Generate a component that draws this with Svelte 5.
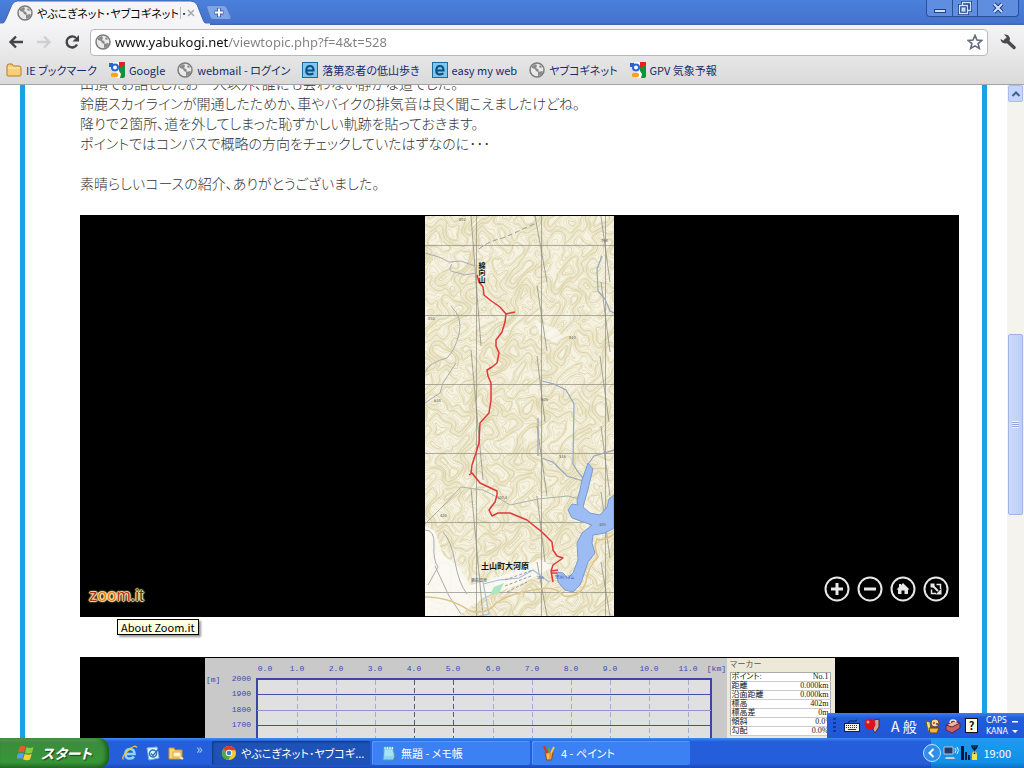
<script>
  const bookmarks = [
    { icon: 'folder', label: 'IE ブックマーク' },
    { icon: 'google', label: 'Google' },
    { icon: 'globe', label: 'webmail - ログイン' },
    { icon: 'e', label: '落第忍者の低山歩き' },
    { icon: 'e', label: 'easy my web' },
    { icon: 'globe', label: 'ヤブコギネット' },
    { icon: 'google', label: 'GPV 気象予報' }
  ];

  const post = [
    '山頂でお話ししたお一人以外、誰にも会わない静かな道でした。',
    '鈴鹿スカイラインが開通したためか、車やバイクの排気音は良く聞こえましたけどね。',
    '降りで２箇所、道を外してしまった恥ずかしい軌跡を貼っておきます。',
    'ポイントではコンパスで概略の方向をチェックしていたはずなのに･･･',
    '',
    '素晴らしいコースの紹介、ありがとうございました。'
  ];

  const marker = [
    ['ポイント:', 'No.1'],
    ['距離', '0.000km'],
    ['沿面距離', '0.000km'],
    ['標高', '402m'],
    ['標高差', '0m'],
    ['傾斜', '0.0°'],
    ['勾配', '0.0%']
  ];

  const tasks = [
    { icon: 'chrome', label: 'やぶこぎネット･ヤブコギ...', active: true },
    { icon: 'note', label: '無題 - メモ帳', active: false },
    { icon: 'paint', label: '4 - ペイント', active: false }
  ];

  const km = [
    [60, '0.0'], [92, '1.0'], [131, '2.0'], [170, '3.0'], [209, '4.0'], [248, '5.0'],
    [288, '6.0'], [327, '7.0'], [366, '8.0'], [405, '9.0'], [444, '10.0'], [483, '11.0']
  ];
  const heights = [[21, '2000'], [36, '1900'], [52, '1800'], [67, '1700'], [83, '1600']];

  // Terrain height at a point of the map sheet
  function terrain(px, py) {
    const x = px * 1.5;
    const y = py * 1.5;
    const u = x + 7 * Math.sin(y / 13) + 4 * Math.sin(y / 5.3 + x / 17);
    const v = y + 7 * Math.sin(x / 11) + 4 * Math.cos(x / 4.7 + y / 19);
    return (
      3 * Math.sin(u / 19) * Math.cos(v / 23) +
      1.6 * Math.sin(u / 8 + v / 15) +
      1.4 * Math.cos(v / 9 - u / 21) +
      0.5 * Math.sin(u / 3.6) * Math.sin(v / 4)
    );
  }

  // Marching squares over the terrain, one path for all levels
  function contours(step, levels) {
    let d = '';
    for (let y = 0; y < 400; y += step) {
      for (let x = 0; x < 189; x += step) {
        const c = [
          [x, y, terrain(x, y)],
          [x + step, y, terrain(x + step, y)],
          [x + step, y + step, terrain(x + step, y + step)],
          [x, y + step, terrain(x, y + step)]
        ];
        for (const l of levels) {
          const p = [];
          for (let i = 0; i < 4; i++) {
            const a = c[i];
            const b = c[(i + 1) % 4];
            if (a[2] < l !== b[2] < l) {
              const t = (l - a[2]) / (b[2] - a[2]);
              p.push((a[0] + t * (b[0] - a[0])).toFixed(1) + ' ' + (a[1] + t * (b[1] - a[1])).toFixed(1));
            }
          }
          for (let i = 0; i + 1 < p.length; i += 2) d += 'M' + p[i] + 'L' + p[i + 1];
        }
      }
    }
    return d;
  }
  const fine = contours(2, [-5, -4.3, -3.6, -2.9, -2.2, -1.5, -0.8, -0.1, 0.6, 1.3, 2, 2.7, 3.4, 4.1, 4.8]);
  const bold = contours(2, [-4, -1.9, 0.2, 2.3, 4.4]);
</script>

{#snippet icon(name)}
  <svg class="ico" viewBox="0 0 16 16" aria-hidden="true">
    {#if name === 'folder'}
      <path d="M1 4q0-2 2-2h3l1.500 2H13q2 0 2 2v7q0 1-1 1H2q-1 0-1-1z" fill="#f7cf7b" stroke="#b57c22" />
      <path d="M2 6h12" stroke="#fff0c0" />
    {:else if name === 'google'}
      <path d="M8 0h8v9H8z" fill="#e0231c" />
      <path d="M10 6l6-3v11q0 2-2 2h-4z" fill="#12913b" />
      <path d="M0 1h4v4H0z" fill="#2a62d8" />
      <path d="M4 0h6v9l2 3-1 4H4z" fill="#fff" />
      <circle cx="6" cy="5.500" r="3" fill="#fff" stroke="#2a62d8" stroke-width="2" />
      <ellipse cx="5.500" cy="13" rx="3.700" ry="2.500" fill="#f6a41a" />
    {:else if name === 'globe'}
      <circle cx="8" cy="8" r="7" fill="#e9e9e9" stroke="#7c7c7c" stroke-width="1.500" />
      <path d="M3 4l4-2 1 2-1 2 2 1 1 2-1 1-2-1-1-2-3-1zM9 10l4-1 1 1-2 3-3 1zM11 3l2 2-1 1-2-1z" fill="#8b8b8b" />
    {:else if name === 'e'}
      <rect x="0.500" y="0.500" width="15" height="15" fill="#7cc8ee" stroke="#1c6b9f" />
      <path d="M4.500 8.500h7q0-4.500-3.500-4.500T4.300 8.300 8.300 12.300q2 0 3-1" fill="none" stroke="#0f4f86" stroke-width="2.200" />
    {:else if name === 'chrome'}
      <circle cx="8" cy="8" r="7" fill="#f7ca2b" />
      <path d="M8 8L1.900 4.500A7 7 0 0 1 14.500 5.300H8z" fill="#de3b2f" />
      <path d="M8 8L1.900 4.500A7 7 0 0 0 7.500 15l3-5.500z" fill="#4fa94a" />
      <circle cx="8" cy="8" r="3.200" fill="#fff" />
      <circle cx="8" cy="8" r="2.300" fill="#3d7fd6" />
    {:else if name === 'note'}
      <path d="M3 2h9l2 11-2 2H2z" fill="#8ad4f4" stroke="#4c9cc4" />
      <path d="M4 2v2M6.500 2v2M9 2v2M11.500 2v2" stroke="#e9fbff" />
      <path d="M4 6h7M4 8h8M4 10h8" stroke="#cdf0fc" />
      <path d="M12 14l3-3v3z" fill="#5b8b3a" />
    {:else if name === 'paint'}
      <path d="M4 7h8l-1.500 8h-5z" fill="#e99b3b" stroke="#94501a" />
      <path d="M6 8L3 1" stroke="#d13b21" stroke-width="2" />
      <path d="M8 8V3" stroke="#59a53a" stroke-width="2" />
      <path d="M10 8l3-6" stroke="#f2c84c" stroke-width="2" />
      <path d="M7 9v5" stroke="#fbe08a" />
    {:else if name === 'ie'}
      <path d="M4 9h8.500q0-5-4.500-5T3.500 9 8 13.500q2.800 0 4-2" fill="none" stroke="#8fd4ff" stroke-width="2.600" />
      <path d="M1.500 14.500Q-1 12 6 5.500T15 2.500" fill="none" stroke="#f4c437" stroke-width="1.300" />
    {:else if name === 'outlook'}
      <path d="M2 3l10-1 2 11-10 2z" fill="#e4f2fc" stroke="#7fb4e0" />
      <circle cx="8" cy="8.500" r="3.500" fill="none" stroke="#2b78c8" stroke-width="1.500" />
      <path d="M6 8.500l2 2 5-6" fill="none" stroke="#2f6fb4" stroke-width="1.300" />
    {:else if name === 'explorer'}
      <path d="M1 3h5l1 2h7v9H1z" fill="#f8d777" stroke="#c9922c" />
      <rect x="5" y="7" width="8" height="5" fill="#fff6d0" stroke="#d9a63e" />
      <path d="M12 12l3 2" stroke="#f3efe0" stroke-width="2" />
    {:else if name === 'keyboard'}
      <path d="M4 5q1-3 4-2t5-1" fill="none" stroke="#101c50" />
      <rect x="0.500" y="5.500" width="15" height="8" fill="#f4f0e0" stroke="#101c50" />
      <path d="M2 7.500h12M2 9.500h12" stroke="#333" stroke-dasharray="1 1" />
      <path d="M4 11.500h8" stroke="#333" />
    {:else if name === 'ime'}
      <path d="M10 2l5-1v8l-4 6-2-3z" fill="#c9a9a4" stroke="#5a2323" />
      <circle cx="6" cy="6" r="5.500" fill="#d8141c" />
      <circle cx="4" cy="4" r="1.500" fill="#ff9c9c" />
    {:else if name === 'palette'}
      <path d="M1 3l4 1 1 9H3z" fill="#ece08c" stroke="#6b5b20" />
      <circle cx="10" cy="5" r="4" fill="#f2d9a2" stroke="#6b4422" />
      <path d="M4 10h10l-2 5H5z" fill="#f4b532" stroke="#6b4422" />
      <circle cx="9" cy="5" r="1" fill="#c9302a" /><circle cx="12" cy="6" r="1" fill="#28408e" />
    {:else if name === 'toolbox'}
      <path d="M1 7l8-4 6 2v5l-8 5-6-3z" fill="#c9606a" stroke="#5f2634" />
      <path d="M1 7l6 2 8-4-6-2z" fill="#f2b3ad" stroke="#5f2634" />
      <path d="M5 5q0-3 3-3t3 2" fill="none" stroke="#f7e9cd" stroke-width="1.500" />
    {/if}
  </svg>
{/snippet}

<div class="desktop">
  <header class="chrome">
    <div class="tabs">
      <div class="tab">
        <svg class="tabshape" viewBox="0 0 214 25" preserveAspectRatio="none" aria-hidden="true">
          <path d="M0 25Q4 24 6 19L12 5Q14 1 18 1H194Q199 1 201 5L207 20Q209 25 214 25Z" fill="#f5f5f7" stroke="#3e64aa" />
          <path d="M0 24.500H214" stroke="#f5f5f7" stroke-width="2" />
        </svg>
        {@render icon('globe')}
        <span class="title">やぶこぎネット･ヤブコギネット ･</span>
        <span class="cut"></span>
        <button class="x" aria-label="タブを閉じる">
          <svg viewBox="0 0 8 8"><path d="M1 1l6 6M7 1L1 7" stroke="#a7a7a7" stroke-width="1.500" /></svg>
        </button>
      </div>
      <button class="newtab" aria-label="新しいタブ">
        <svg viewBox="0 0 26 15">
          <path d="M2 0.500H18Q20 0.500 21 3L25 12Q25.500 14.500 23 14.500H7Q5 14.500 4 12L0.700 3Q0 0.500 2 0.500Z" fill="#7ea4e8" stroke="#5077bd" />
          <path d="M8.500 7.500h9M13 3v9" stroke="#3f66ad" stroke-width="4" />
          <path d="M9 7.500h8M13 3.500v8" stroke="#fff" stroke-width="2" />
        </svg>
      </button>
      <div class="win">
        <button aria-label="最小化"><svg viewBox="0 0 14 14"><rect x="1.500" y="8.500" width="11" height="3" fill="#d4e1fa" stroke="#1f3f86" /></svg></button>
        <button aria-label="元に戻す"><svg viewBox="0 0 14 14"><path d="M4.500 4V1.500h8v8H10M1.500 4.500h8v8h-8z" fill="none" stroke="#1f3f86" stroke-width="3" /><path d="M4.500 4V1.500h8v8H10M1.500 4.500h8v8h-8zM4.500 7.500h2v2h-2z" fill="none" stroke="#d4e1fa" stroke-width="1.300" /></svg></button>
        <button class="wide" aria-label="閉じる"><svg viewBox="0 0 14 14"><path d="M3 3l8 8M11 3l-8 8" stroke="#1f3f86" stroke-width="4" /><path d="M3 3l8 8M11 3l-8 8" stroke="#d4e1fa" stroke-width="2" /></svg></button>
      </div>
    </div>

    <div class="toolbar">
      <button aria-label="戻る"><svg viewBox="0 0 16 16"><path d="M15 8H3M8 2.500L2.500 8 8 13.500" fill="none" stroke="#444" stroke-width="2.400" /></svg></button>
      <button aria-label="進む"><svg viewBox="0 0 16 16"><path d="M1 8h12M8 2.500L13.500 8 8 13.500" fill="none" stroke="#cfcfcf" stroke-width="2.400" /></svg></button>
      <button aria-label="再読み込み"><svg viewBox="0 0 16 16"><path d="M13 10.500A5.500 5.500 0 1 1 12 4" fill="none" stroke="#444" stroke-width="2.400" /><path d="M15 1v6.500H8.500z" fill="#444" /></svg></button>
      <div class="omni">
        {@render icon('globe')}
        <input aria-label="アドレス" value="www.yabukogi.net/viewtopic.php?f=4&t=528" />
        <button aria-label="ブックマークに追加"><svg viewBox="0 0 18 18"><path d="M9 1.500l2.200 5.300 5.600.400-4.300 3.600 1.400 5.500L9 13.300l-4.900 3 1.400-5.500L1.200 7.200l5.600-.400z" fill="#fff" stroke="#666b7c" stroke-width="1.800" /></svg></button>
      </div>
      <button aria-label="設定"><svg viewBox="0 0 16 16"><path d="M6 6l8 7.500" stroke="#4a4a4a" stroke-width="3.400" stroke-linecap="round" /><path d="M4 0.500q5-.500 6 4-.500 5-5 5-4-.500-4.500-4.500l3 1.500 2.500-1L6.500 3z" fill="#4a4a4a" /></svg></button>
    </div>

    <nav class="marks">
      {#each bookmarks as b}
        <a href="#top">{@render icon(b.icon)}<span>{b.label}</span></a>
      {/each}
    </nav>
  </header>

  <div class="view">
    <main>
      <article>
        {#each post as line}<p>{line}</p>{/each}
      </article>

      <section class="zoomit">
        <svg class="map" viewBox="0 0 189 400" aria-label="登山ルート地図">
          <rect width="189" height="400" fill="#f5f2e2" />
          <path d={fine} stroke="#e2dab4" stroke-width="0.700" fill="none" />
          <path d={bold} stroke="#d6ca98" stroke-width="0.700" fill="none" />
          <path d="M0 310l10 5 8 24 14 10 14 20 40-12 28-14 14 8-30 16-40 14-26 20H0z" fill="#fbfaf4" opacity="0.850" />
          <path d="M110 105l22 8 6 8-10 5-14-8z" fill="#fbfaf2" opacity="0.700" />
          <g stroke="#8c8c80" fill="none" stroke-width="0.700">
            <path d="M51.500 0V400M116.500 0V400M180.500 0V400M0 29.500H189M0 99.500H189M0 168.500H189M0 237.500H189M0 306.500H189M0 376.500H189" />
            <path d="M46 0l10 130M46 134l12 130M46 272l12 128M110 0l12 66M112 70l10 65M112 140l8 66M112 210l10 70M112 280l8 66M112 346l10 54M176 0l9 66M176 66l9 70M175 140l9 66M176 210l9 70M176 276l9 66M176 346l9 54" stroke="#86867a" />
          </g>
          <g fill="none" stroke="#a9abb0">
            <path d="M0 37l14 4 10 5 12-1 14 5M27 48q-5 7 2 8t10 3l12-2" />
            <path d="M54 33q10-8 24-11 16-7 33-15" stroke="#8f9ba8" stroke-dasharray="5 3" />
            <path d="M26 90q12 12 8 28t-12 24q-17 4-22 14M31 147l-13 20-3 10-15 10" />
            <path d="M0 308l20-20 16-17 22 3 14 7 13 8 28-6 30-3 11 3" stroke="#a9b4a6" />
            <path d="M0 314q10 0 9 15t4 22l-10 18M18 316q8 8 12 30t12 32M10 350l14 30 12 18" />
          </g>
          <g fill="none" stroke="#98a6bf" stroke-width="1.200">
            <path d="M177 40l-5 13 1 22 7 8 5 12 4 2" />
            <path d="M117 165l12 3 12 6 8 14-1 60 5 8 6 7M113 202v38M116 242l12 4 14 14 16 5M189 234l-20 6-5 7" />
            <path d="M58 368l16-4 20-2 14-8 16 12M58 366l6 32-10 2" stroke="#a3bfe0" />
          </g>
          <path d="M163 247L168 253 162 277 158 291 165 297 175 299 182 291 184 283 189 279V312L180 317 168 319 167 327 170 337 163 346 158 361 155 369 148 376 140 374 133 366 132 356 138 357 143 362 148 357 153 344 152 327 157 317 167 309 158 306 147 302 143 294 147 288 153 289 152 284 155 274 157 264Z" fill="#9dbcf3" stroke="#7b9ad0" stroke-linejoin="round" />
          <path d="M189 318q-10 8-17 5-4 8 1 18-10 10-12 25-6 16-22 14-8-10-24-7-30 4-44 14-8 12-26 8-20-14-45-14" fill="none" stroke="#ddc48d" stroke-width="1.500" />
          <path d="M69 371l10-4-5 10-9 2z" fill="#a9e8c3" />
          <path d="M80 364l28-10M80 370l26-10M82 376l20-10" stroke="#999" stroke-dasharray="3 2" />
          <path d="M52 59L54 66 58 71 59 79 65 84 75 91 81 98 90 96M81 98L80 106 77 116 71 124 71 130 74 137 72 147 67 151 62 154 63 160 66 167 66 184 64 197 55 207 54 227 51 237 47 249 46 257M44 259L47 257 55 267 72 275 72 279 70 286 64 294 67 300 73 297 85 297 102 304 117 316 127 326 128 334 132 340 138 342 128 349 126 355 133 354M126 357H132M126 355L128 366" fill="none" stroke="#e0383a" stroke-width="1.500" stroke-linejoin="round" />
          <text x="57" y="46" class="place" fill="#111">綿向山</text>
          <text x="56" y="353" class="town" fill="#111">土山町大河原</text>
          <g class="tiny" fill="#555">
            <text x="34" y="5">801</text><text x="3" y="104">852</text><text x="144" y="123">810</text><text x="116" y="185">605</text><text x="9" y="186">634</text><text x="176" y="26">764</text><text x="134" y="242">516</text><text x="72" y="283">500.4</text><text x="15" y="301">426</text><text x="174" y="310">305</text>
            <text x="46" y="366">鹿苑温泉</text><text x="112" y="363" fill="#3f62b8">296</text><text x="130" y="363" fill="#3f62b8">野洲川ダム</text>
          </g>
        </svg>

        <a class="brand" href="#zoom"><b>z</b><i>oo</i><b>m</b><em>.it</em></a>
        <div class="controls">
          <button aria-label="拡大"><svg viewBox="0 0 26 26"><circle cx="13" cy="13" r="11.500" /><path d="M7 13h12M13 7v12" class="thick" /></svg></button>
          <button aria-label="縮小"><svg viewBox="0 0 26 26"><circle cx="13" cy="13" r="11.500" /><path d="M7 13h12" class="thick" /></svg></button>
          <button aria-label="ホーム"><svg viewBox="0 0 26 26"><circle cx="13" cy="13" r="11.500" /><path d="M6.500 13.500L9 11V8h2v1.200L13 7l6.500 6.500H18V18h-3.500v-3.500h-3V18H8v-4.500z" class="fill" /></svg></button>
          <button aria-label="全画面"><svg viewBox="0 0 26 26"><circle cx="13" cy="13" r="11.500" /><path d="M13.500 8.500h4V13M8.500 13.500v4h4.500" class="mid" /><path d="M10 10l5 5" /><path d="M7.500 7.500h4v4h-4zM18.500 18.500v-6l-6 6z" class="fill" /></svg></button>
        </div>
        <div class="tip" role="tooltip">About Zoom.it</div>
      </section>

      <section class="profile">
        <div class="sheet">
          <svg class="graph" viewBox="0 0 522 110" aria-label="標高グラフ">
            <rect width="522" height="110" fill="#c9c9c9" />
            <rect x="52" y="21" width="454" height="100" fill="#e0e0e1" stroke="#3c46a0" stroke-width="2" />
            {#each heights as [y, t], i}
              {#if i > 0}<path d="M52 {y + 0.5}H506" stroke={i % 2 ? '#414fa6' : '#8d96cf'} />{/if}
              <text x="46" y={y + 2} text-anchor="end">{t}</text>
            {/each}
            {#each km as [x, t], i}
              {#if i > 0}<path d="M{x + 0.5} 22V110" stroke={i > 3 && i < 6 ? '#555a80' : '#a5abd4'} stroke-dasharray="5 3" />{/if}
              <text {x} y="13" text-anchor="middle">{t}</text>
            {/each}
            <text x="1" y="24">[m]</text>
            <text x="521" y="13" text-anchor="end">[km]</text>
          </svg>
          <div class="marker">
            <h2>マーカー</h2>
            <table>
              <tbody>
                {#each marker as [k, v]}<tr><th scope="row">{k}</th><td>{v}</td></tr>{/each}
              </tbody>
            </table>
          </div>
        </div>
      </section>
    </main>

    <div class="scroll">
      <button aria-label="上へ"><svg viewBox="0 0 10 10"><path d="M1.500 7L5 3.500 8.500 7" fill="none" stroke="#3f5d94" stroke-width="2" /></svg></button>
      <div class="track">
        <div class="thumb" style="top: 37.5%; height: 29.2%"><span></span></div>
      </div>
      <button aria-label="下へ"><svg viewBox="0 0 10 10"><path d="M1.500 3L5 6.500 8.500 3" fill="none" stroke="#3f5d94" stroke-width="2" /></svg></button>
    </div>

    <div class="langbar">
      <span class="grip"></span>
      {@render icon('keyboard')}
      {@render icon('ime')}
      <span class="mode">A 般</span>
      {@render icon('palette')}
      {@render icon('toolbox')}
      <span class="help">?</span>
      <span class="keys"><span>CAPS</span><span>KANA</span></span>
      <svg class="opts" viewBox="0 0 6 18"><path d="M0 4h6v1.500H0zM0 13h6l-3 3z" fill="#fff" /></svg>
    </div>
  </div>

  <footer class="taskbar">
    <button class="start">
      <svg viewBox="0 0 18 18" aria-hidden="true">
        <path d="M2.500 3q3-2 6-.200L7 8.300Q4 7 1 8.500z" fill="#f0582c" />
        <path d="M9.500 3.200q3 1.500 7-.200L15 8.700q-3.500 1.500-7 .200z" fill="#8bcb3d" />
        <path d="M.800 9.700q3-1.500 6-.200L5.300 15Q2.500 13.500-.700 15z" fill="#5a9df2" />
        <path d="M7.700 10q3.500 1.300 7 0L13 15.500q-3.500 1.500-7-.300z" fill="#fbd038" />
      </svg>
      <span>スタート</span>
    </button>
    <div class="quick">
      {@render icon('ie')}
      {@render icon('outlook')}
      {@render icon('explorer')}
      <span class="more">»</span>
    </div>
    <div class="tasks">
      {#each tasks as t}
        <button class:active={t.active}>{@render icon(t.icon)}<span>{t.label}</span></button>
      {/each}
    </div>
    <div class="tray">
      <svg class="hide" viewBox="0 0 18 18"><circle cx="9" cy="9" r="8.500" fill="#2f8eea" stroke="#bfe2ff" /><path d="M10.500 5l-4 4 4 4" fill="none" stroke="#fff" stroke-width="2" /></svg>
      <svg class="net" viewBox="0 0 36 18">
        <path d="M1 3h9v7H1z" fill="#233a6b" stroke="#b9c6d6" /><path d="M3 13h8l1 2H2z" fill="#c6ced8" />
        <path d="M12 4q2 2 0 5M14 3q3 3 0 7" fill="none" stroke="#d9efff" />
        <path d="M18 2h3v14h-3zM22 8h2v8h-2zM25 11h2v5h-2z" fill="#091a3d" />
        <path d="M28 2h7M29 3l2.500 3L34 3M31.500 3v7" stroke="#091a3d" stroke-width="1.500" fill="none" />
        <rect x="29" y="10" width="5" height="6" fill="#f2e34b" /><path d="M30 10V8h3v2" fill="none" stroke="#f2e34b" />
      </svg>
      <time>19:00</time>
    </div>
  </footer>
</div>

<style>
  :global(body) {
    margin: 0;
  }
  .desktop {
    display: flex;
    flex-direction: column;
    height: 100vh;
    overflow: hidden;
    background: #fff;
    color: #333;
    font: 11px/16px 'Noto Sans CJK JP', sans-serif;
    font-feature-settings: 'palt';
  }
  button {
    font: inherit;
    font-feature-settings: inherit;
    color: inherit;
    border: 0;
    padding: 0;
    background: none;
    display: flex;
    align-items: center;
    justify-content: center;
  }
  .ico {
    width: 16px;
    height: 16px;
    flex: none;
  }
  .chrome {
    flex: none;
    background: linear-gradient(#f5f5f7 25px, #dadada);
    border-bottom: 1px solid #a3a3a3;
  }

  .tabs {
    display: flex;
    height: 25px;
    background: linear-gradient(#4a80dc, #4673cd 90%, #3d63ae);
  }
  .tab {
    position: relative;
    display: flex;
    align-items: center;
    box-sizing: border-box;
    width: 210px;
    padding: 0 0 0 17px;
    color: #000;
  }
  .tab > .ico,
  .tab > span,
  .tab > button {
    position: relative;
  }
  .tabshape {
    position: absolute;
    inset: 0;
    width: 100%;
    height: 100%;
  }
  .title {
    width: 140px;
    margin-left: 4px;
    white-space: nowrap;
  }
  .cut {
    width: 1px;
    height: 12px;
    margin: 0 6px 0 3px;
    background: #bbb;
  }
  .x svg {
    width: 8px;
    height: 8px;
  }
  .newtab {
    align-self: center;
    margin-left: -4px;
  }
  .newtab svg {
    width: 26px;
    height: 15px;
  }
  .win {
    display: flex;
    height: 16px;
    margin: 0 5px 0 auto;
    border: 1px solid #2b4f97;
    border-top: 0;
    border-radius: 0 0 4px 4px;
    background: #5f8ddf;
  }
  .win button {
    width: 25px;
  }
  .win button + button {
    border-left: 1px solid #2b4f97;
  }
  .win .wide {
    width: 41px;
  }
  .win svg {
    width: 14px;
    height: 14px;
  }

  .toolbar {
    display: flex;
    align-items: center;
    gap: 12px;
    height: 34px;
    padding: 0 8px;
  }
  .toolbar svg {
    width: 16px;
    height: 16px;
  }
  .omni {
    flex: 1;
    display: flex;
    align-items: center;
    gap: 4px;
    box-sizing: border-box;
    height: 27px;
    margin-left: -2px;
    padding: 0 4px;
    border: 1px solid #b9b9bd;
    border-radius: 4px;
    background: #fff;
  }
  .omni input {
    flex: 1;
    min-width: 0;
    border: 0;
    padding: 0;
    outline: 0;
    font: 13px/20px 'Noto Sans', sans-serif;
    color: transparent;
    background: linear-gradient(90deg, #111 113px, #808080 113px);
    background-clip: text;
    -webkit-background-clip: text;
  }

  .marks {
    display: flex;
    align-items: center;
    gap: 12px;
    height: 22px;
    padding: 0 6px 3px;
  }
  .marks a {
    display: flex;
    align-items: center;
    gap: 4px;
    color: #14296f;
    text-decoration: none;
    white-space: nowrap;
  }

  .view {
    position: relative;
    flex: 1;
    min-height: 0;
    display: flex;
    overflow: hidden;
  }
  main {
    flex: 1;
    height: 700px;
    margin: 0 20px;
    padding: 0 23px 0 55px;
    border: solid #1ba1e8;
    border-width: 0 5px;
  }
  article {
    margin: -12px 0 22px;
    font-size: 14px;
    font-weight: 300;
    line-height: 20px;
  }
  p {
    margin: 0;
    min-height: 20px;
    white-space: nowrap;
  }

  .zoomit {
    position: relative;
    display: flex;
    justify-content: center;
    height: 402px;
    background: #000;
  }
  .map {
    width: 189px;
    height: 400px;
    margin-top: 1px;
  }
  .place {
    font-size: 7px;
    font-weight: 700;
    writing-mode: vertical-rl;
  }
  .town {
    font-size: 8px;
    font-weight: 700;
  }
  .tiny {
    font-size: 4px;
  }
  .brand {
    position: absolute;
    left: 9px;
    bottom: 12px;
    font: 17px/18px 'Liberation Sans', sans-serif;
    text-decoration: none;
    text-shadow: 1px 0 1px #fff3b0, -1px 0 1px #fff3b0, 0 1px 1px #fff3b0, 0 -1px 1px #fff3b0, 0 0 3px #fff3b0;
  }
  .brand b {
    color: #b8321a;
    font-weight: 400;
  }
  .brand i {
    color: #ee7d1c;
    font-style: normal;
  }
  .brand em {
    color: #4a3a1c;
    font-style: normal;
  }
  .controls {
    position: absolute;
    right: 10px;
    bottom: 15px;
    display: flex;
    gap: 7px;
  }
  .controls svg {
    width: 26px;
    height: 26px;
    fill: none;
    stroke: #e8e8e8;
    stroke-width: 2;
  }
  .controls .thick {
    stroke-width: 3;
  }
  .controls .mid {
    stroke-width: 1.5;
  }
  .controls .fill {
    fill: #e8e8e8;
    stroke: none;
  }
  .tip {
    position: absolute;
    left: 37px;
    top: 404px;
    padding: 0 3px;
    border: 1px solid #000;
    background: #ffffe1;
    box-shadow: 2px 2px 2px #0006;
    color: #000;
    line-height: 14px;
  }

  .profile {
    display: flex;
    justify-content: center;
    height: 120px;
    margin-top: 40px;
    background: #000;
  }
  .sheet {
    display: flex;
    width: 630px;
    margin-top: 1px;
    background: #c9c9c9;
  }
  .graph {
    width: 522px;
    height: 110px;
  }
  .graph text {
    font: 8px 'Liberation Mono', monospace;
    fill: #3c4ab0;
  }
  .marker {
    flex: 1;
    padding: 0 4px 0 3px;
    background: #ece9d8;
    font-family: 'Liberation Serif', 'Noto Sans CJK JP', serif;
  }
  h2 {
    margin: 0 0 2px;
    font: 8px/12px 'Noto Sans CJK JP', sans-serif;
    color: #555;
  }
  table {
    width: 100%;
    border: 1px solid #aaa;
    border-collapse: collapse;
    background: #fff;
    font-size: 8px;
    line-height: 8px;
    color: #111;
  }
  th,
  td {
    padding: 0 1px;
    border-bottom: 1px solid #ccc;
    font-weight: 400;
    text-align: left;
    white-space: nowrap;
  }
  td {
    text-align: right;
  }

  .scroll {
    display: flex;
    flex-direction: column;
    box-sizing: border-box;
    width: 17px;
    padding: 0 1px;
    background: #f4f3ee;
  }
  .scroll button {
    box-sizing: border-box;
    width: 15px;
    height: 17px;
    border: 1px solid #a9bdec;
    border-radius: 2px;
    background: #c6d6fb;
  }
  .scroll svg {
    width: 10px;
    height: 10px;
  }
  .track {
    position: relative;
    flex: 1;
  }
  .thumb {
    position: absolute;
    left: 0;
    right: 0;
    box-sizing: border-box;
    display: flex;
    align-items: center;
    justify-content: center;
    border: 1px solid #a0b5e6;
    border-radius: 2px;
    background: linear-gradient(90deg, #cbdafc, #bccffa);
  }
  .thumb span {
    width: 7px;
    height: 7px;
    background: repeating-linear-gradient(#eef4fe 0 1px, #8ca7de 1px 2px);
  }

  .langbar {
    position: absolute;
    right: 0;
    bottom: 0;
    display: flex;
    align-items: center;
    gap: 4px;
    box-sizing: border-box;
    width: 197px;
    height: 25px;
    padding: 0 6px;
    background: linear-gradient(#3f7df0, #225bdc 20%, #2157d7);
    color: #fff;
  }
  .grip {
    width: 3px;
    height: 15px;
    margin-right: 4px;
    background: repeating-linear-gradient(#123a9c 0 2px, transparent 2px 4px);
  }
  .mode {
    flex: 1;
    padding-left: 7px;
    font-size: 14px;
    white-space: nowrap;
  }
  .help {
    width: 11px;
    border: 1px solid #111;
    background: #fffbe0;
    color: #111;
    font-weight: 700;
    line-height: 13px;
    text-align: center;
  }
  .keys {
    display: flex;
    flex-direction: column;
    margin-left: 4px;
    font: 8px/11px 'DejaVu Sans', sans-serif;
  }
  .opts {
    width: 6px;
    height: 18px;
    flex: none;
  }

  .taskbar {
    flex: none;
    display: flex;
    height: 30px;
    background: linear-gradient(#3f8cf3, #245edb 12%, #245edb 85%, #1c48b5);
    color: #fff;
  }
  .start {
    gap: 6px;
    width: 109px;
    border-radius: 0 10px 10px 0;
    background: linear-gradient(#5faf5f, #3c8d3c 15%, #379637 80%, #27702a);
    box-shadow: inset -3px 0 4px #1d5c1f;
    font-size: 14px;
    font-style: italic;
    font-weight: 700;
    text-shadow: 1px 1px 1px #1d3d1d;
  }
  .start svg {
    width: 18px;
    height: 18px;
  }
  .quick {
    display: flex;
    align-items: center;
    gap: 7px;
    box-sizing: border-box;
    width: 103px;
    padding-left: 13px;
  }
  .more {
    align-self: flex-start;
    margin: 2px 0 0 5px;
    font-size: 14px;
    color: #b9d4ff;
  }
  .tasks {
    display: flex;
    flex: 1;
    gap: 2px;
    padding: 3px 0;
  }
  .tasks button {
    flex: 0 1 158px;
    justify-content: flex-start;
    gap: 4px;
    padding-left: 9px;
    border-radius: 2px;
    background: #3c81f3;
    box-shadow: inset 1px 1px #5b9af8;
    white-space: nowrap;
    overflow: hidden;
  }
  .tasks .active {
    background: #1e52b7;
    box-shadow: inset 1px 1px 2px #12367f;
  }
  .tray {
    display: flex;
    align-items: center;
    gap: 2px;
    padding-right: 13px;
    background: linear-gradient(#1e9cf0, #1290e8 80%, #0d70c4);
  }
  .hide {
    width: 18px;
    height: 18px;
    margin-left: -8px;
  }
  .net {
    width: 36px;
    height: 18px;
  }
  time {
    margin-left: 3px;
  }
</style>
